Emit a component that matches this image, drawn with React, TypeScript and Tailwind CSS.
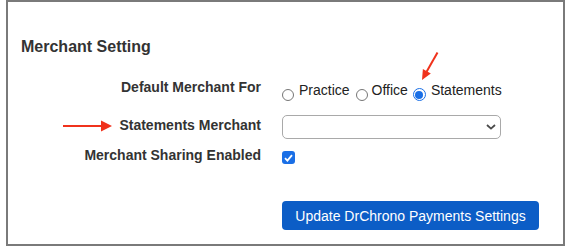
import React from 'react';

const font = "font-['Liberation_Sans',Arial,sans-serif]";

const Radio = ({ checked }: { checked?: boolean }) =>
  checked ? (
    <span className="mt-[6px] flex h-[13px] w-[13px] shrink-0 items-center justify-center rounded-full border border-[#1a6fe6] bg-white">
      <span className="h-[8px] w-[8px] rounded-full bg-[#1a6fe6]" />
    </span>
  ) : (
    <span className="mt-[7px] h-[12px] w-[12px] shrink-0 rounded-full border border-[#767676] bg-white" />
  );

export default function App() {
  return (
    <div className={`relative h-[247px] w-[568px] bg-white ${font}`}>
      <div className="ml-[6px] h-[246px] w-[559px] border-2 border-[#7a7a7a] bg-white">
        {/* heading */}
        <h2 className="pl-[13px] pt-[36px] text-[16px] font-bold leading-[18px] text-[#333]">
          Merchant Setting
        </h2>

        {/* default merchant */}
        <div className="mt-[23px] flex items-start">
          <div className="w-[253px] text-right text-[14px] font-bold leading-[16px] text-[#333]">
            Default Merchant For
          </div>
          <div className="ml-[21px] mt-[3px] flex items-start text-[14px] leading-[16px] text-[#222]">
            <Radio />
            <span className="ml-[5px]">Practice</span>
            <span className="ml-[6px]" />
            <Radio />
            <span className="ml-[4px]">Office</span>
            <span className="ml-[5px]" />
            <Radio checked />
            <span className="ml-[5px]">Statements</span>
          </div>
        </div>

        {/* statements merchant */}
        <div className="mt-[14px] flex items-start">
          <div className="mt-[2px] w-[253px] text-right text-[14px] font-bold leading-[16px] text-[#333]">
            Statements Merchant
          </div>
          <div className="ml-[21px] flex h-[24px] w-[219px] items-center justify-end rounded-[5px] border border-[#a9a9a9] bg-white pr-[4px]">
            <svg width="10" height="6" viewBox="0 0 10 6" fill="none">
              <path d="M1 1l4 3.6L9 1" stroke="#4a4a4a" strokeWidth="1.8" />
            </svg>
          </div>
        </div>

        {/* sharing */}
        <div className="mt-[8px] flex items-start">
          <div className="w-[253px] text-right text-[14px] font-bold leading-[16px] text-[#333]">
            Merchant Sharing Enabled
          </div>
          <div className="ml-[21px] mt-[4px] flex h-[13px] w-[13px] items-center justify-center rounded-[3px] bg-[#1a6fe6]">
            <svg width="9" height="8" viewBox="0 0 9 8" fill="none">
              <path d="M1 4.2l2.4 2.4L8 1.2" stroke="white" strokeWidth="1.8" />
            </svg>
          </div>
        </div>

        {/* button */}
        <div className="mt-[37px] pl-[274px]">
          <button className="h-[29px] w-[257px] rounded-[4px] bg-[#0c5dc6] text-center text-[14px] leading-[16px] text-white">
            Update DrChrono Payments Settings
          </button>
        </div>
      </div>

      {/* annotation arrows */}
      <svg className="pointer-events-none absolute inset-0" width="568" height="247">
        <line x1="437.5" y1="52.5" x2="426.6" y2="71.7" stroke="#f0321c" strokeWidth="2" />
        <polygon points="422,80 430.8,73.4 422.9,69.1" fill="#f0321c" />
        <line x1="63" y1="126" x2="102" y2="126" stroke="#f0321c" strokeWidth="2" />
        <polygon points="112,126 101,120.5 101,131.5" fill="#f0321c" />
      </svg>
    </div>
  );
}
